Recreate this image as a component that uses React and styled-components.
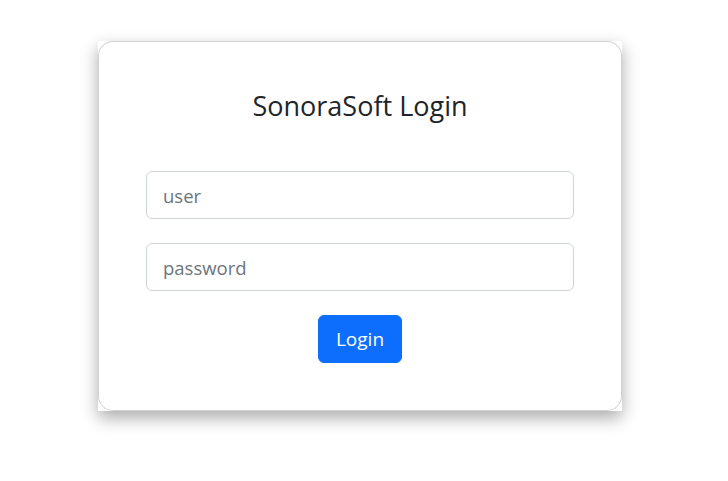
import React from "react";
import styled, { createGlobalStyle } from "styled-components";

const GlobalStyle = createGlobalStyle`
  * {
    box-sizing: border-box;
  }
  body {
    margin: 0;
    background: #ffffff;
    font-family: "Open Sans", "Noto Sans", sans-serif;
    color: #212529;
  }
`;

const Page = styled.div`
  min-height: 100vh;
  display: flex;
  justify-content: center;
  align-items: flex-start;
  padding: 41px 8px 40px 0;
`;

const Shadow = styled.div`
  width: 524px;
  background: #ffffff;
  box-shadow: 0 7px 16px rgba(0, 0, 0, 0.33);
`;

const Card = styled.div`
  border: 1px solid rgba(0, 0, 0, 0.175);
  border-radius: 15px;
  background: #ffffff;
  padding: 47px;
  display: flex;
  flex-direction: column;
  align-items: center;
`;

const Title = styled.h1`
  margin: 0 0 48px;
  font-size: 27px;
  font-weight: 400;
  line-height: 34px;
  color: #212529;
`;

const Form = styled.form`
  width: 100%;
  display: flex;
  flex-direction: column;
  align-items: center;
  gap: 24px;
`;

const Input = styled.input`
  width: 100%;
  height: 48px;
  padding: 0 16px;
  font-family: inherit;
  font-size: 18.5px;
  color: #212529;
  border: 1px solid #ced4da;
  border-radius: 6px;
  outline: none;
  &::placeholder {
    color: #6c757d;
  }
`;

const Button = styled.button`
  height: 48px;
  padding: 0 17px;
  font-family: inherit;
  font-size: 19px;
  color: #ffffff;
  background: #0d6efd;
  border: 1px solid #0d6efd;
  border-radius: 6px;
  cursor: pointer;
`;

export default function App() {
  return (
    <>
      <GlobalStyle />
      <Page>
        <Shadow>
          <Card>
            <Title>SonoraSoft Login</Title>
            <Form onSubmit={(e) => e.preventDefault()}>
              <Input type="text" placeholder="user" />
              <Input type="password" placeholder="password" />
              <Button type="submit">Login</Button>
            </Form>
          </Card>
        </Shadow>
      </Page>
    </>
  );
}
